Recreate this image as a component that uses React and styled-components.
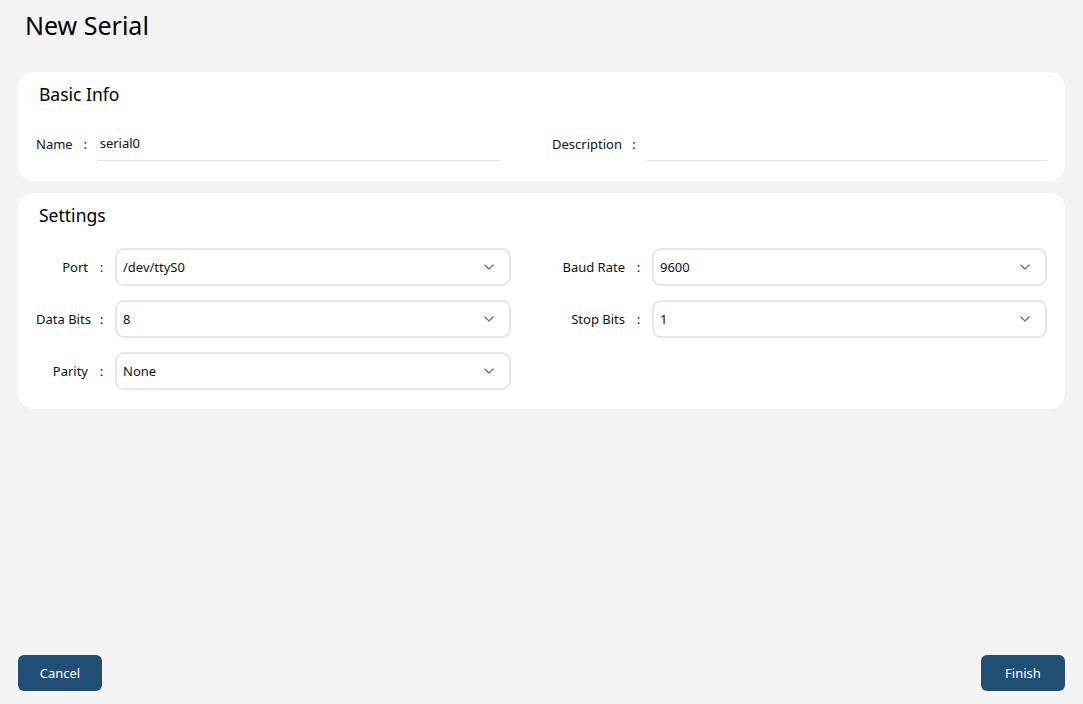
import React from "react";
import styled, { createGlobalStyle } from "styled-components";

const GlobalStyle = createGlobalStyle`
  html, body {
    margin: 0;
    padding: 0;
    background: #f4f4f4;
  }
  body {
    font-family: "Noto Sans", "Open Sans", sans-serif;
    color: #111;
  }
  * { box-sizing: border-box; }
`;

const Page = styled.div`
  min-height: 100vh;
  display: flex;
  flex-direction: column;
  padding: 0 18px 13px;
`;

const Title = styled.h1`
  margin: 0 0 24px;
  padding-left: 7px;
  height: 48px;
  line-height: 50px;
  font-size: 25px;
  font-weight: 400;
  color: #000;
`;

const Card = styled.section`
  background: #fff;
  border-radius: 16px;
  padding: 10px 18px ${(p) => p.$padBottom || 20}px;
  display: flex;
  flex-direction: column;
  gap: ${(p) => p.$gap || 20}px;
  & + & {
    margin-top: 12px;
  }
`;

const CardTitle = styled.h2`
  margin: 0;
  padding-left: 3px;
  font-size: 17.5px;
  line-height: 24px;
  font-weight: 400;
  color: #000;
`;

const Grid = styled.div`
  display: grid;
  grid-template-columns: 475px 1fr;
  column-gap: 41px;
  row-gap: 14px;
`;

const Row = styled.div`
  display: flex;
  align-items: center;
  padding-right: ${(p) => p.$padRight || 0}px;
`;

const Label = styled.span`
  font-size: 13px;
  line-height: 18px;
  white-space: nowrap;
  ${(p) => (p.$width ? `width: ${p.$width}px; text-align: right;` : "")}
`;

const Colon = styled.span`
  width: ${(p) => p.$width || 27}px;
  text-align: center;
  font-size: 13px;
  flex-shrink: 0;
`;

const TextInput = styled.input`
  flex: 1;
  min-width: 0;
  height: 35px;
  border: none;
  border-bottom: 1px solid #e2e2e2;
  outline: none;
  background: transparent;
  padding: 0 2px;
  font-family: inherit;
  font-size: 13px;
  color: #111;
`;

const SelectBox = styled.div`
  flex: 1;
  min-width: 0;
  height: 38px;
  border: 2px solid #e6e6e6;
  border-radius: 9px;
  display: flex;
  align-items: center;
  justify-content: space-between;
  padding: 0 14px 0 6px;
  font-size: 13px;
  color: #111;
`;

const Chevron = styled.svg`
  width: 12px;
  height: 8px;
  flex-shrink: 0;
`;

const Footer = styled.div`
  margin-top: auto;
  display: flex;
  justify-content: space-between;
`;

const Button = styled.button`
  width: 84px;
  height: 36px;
  border: none;
  border-radius: 6px;
  background: #214e75;
  color: #fff;
  font-family: inherit;
  font-size: 13px;
  cursor: pointer;
`;

function Select({ value }) {
  return (
    <SelectBox>
      <span>{value}</span>
      <Chevron viewBox="0 0 12 8">
        <path d="M1.5 1.8 L6 6 L10.5 1.8" fill="none" stroke="#666" strokeWidth="1.2" />
      </Chevron>
    </SelectBox>
  );
}

function SelectField({ label, labelWidth, value }) {
  return (
    <Row>
      <Label $width={labelWidth}>{label}</Label>
      <Colon>:</Colon>
      <Select value={value} />
    </Row>
  );
}

export default function App() {
  return (
    <>
      <GlobalStyle />
      <Page>
        <Title>New Serial</Title>

        <Card>
          <CardTitle>Basic Info</CardTitle>
          <Grid>
            <Row $padRight={11}>
              <Label>Name</Label>
              <Colon $width={25}>:</Colon>
              <TextInput defaultValue="serial0" />
            </Row>
            <Row>
              <Label>Description</Label>
              <Colon $width={24}>:</Colon>
              <TextInput defaultValue="" />
            </Row>
          </Grid>
        </Card>

        <Card $gap={21} $padBottom={19}>
          <CardTitle>Settings</CardTitle>
          <Grid>
            <SelectField label="Port" labelWidth={52} value="/dev/ttyS0" />
            <SelectField label="Baud Rate" labelWidth={73} value="9600" />
            <SelectField label="Data Bits" labelWidth={52} value="8" />
            <SelectField label="Stop Bits" labelWidth={73} value="1" />
            <SelectField label="Parity" labelWidth={52} value="None" />
          </Grid>
        </Card>

        <Footer>
          <Button>Cancel</Button>
          <Button>Finish</Button>
        </Footer>
      </Page>
    </>
  );
}
